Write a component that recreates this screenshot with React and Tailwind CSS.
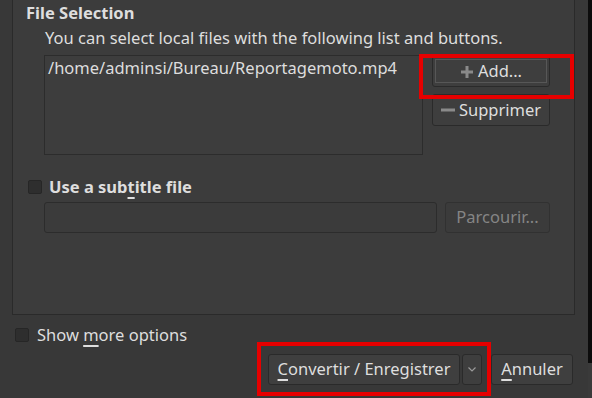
import React from "react";

function Checkbox() {
  return <div className="w-[14px] h-[14px] rounded-[2px] bg-[#2e2e2e] border border-[#262626] shrink-0" />;
}

function Btn({ className = "", children }) {
  return (
    <div className={"flex items-center justify-center rounded-[3px] border border-[#2a2a2a] bg-[#3e3e3e] " + className}>
      {children}
    </div>
  );
}

export default function App() {
  return (
    <div className="w-[592px] h-[398px] bg-[#383838] flex overflow-hidden relative text-[#dedede] font-['Noto_Sans',sans-serif] text-[16.5px]">
      <div className="w-[588px] flex flex-col">
        {/* group */}
        <div className="ml-[12px] w-[563px] h-[315px] border-x border-b border-[#2a2a2a] bg-[#3c3c3c] flex flex-col">
          <div className="pl-[13px] h-[25px] leading-[25px] font-bold">File Selection</div>
          <div className="pl-[32px] h-[25px] leading-[25px]">You can select local files with the following list and buttons.</div>
          <div className="flex mt-[5px] pl-[31px]">
            <div className="w-[379px] h-[100px] border border-[#2c2c2c] bg-[#3d3d3d] px-[3px] leading-[24px]">
              /home/adminsi/Bureau/Reportagemoto.mp4
            </div>
            <div className="ml-[9px] flex flex-col gap-[7px] pt-[1px]">
              <Btn className="w-[118px] h-[31px] relative">
                <div className="absolute left-[2px] top-[2px] right-[2px] bottom-[3px] border border-[#575757]" />
                <svg width="14" height="14" viewBox="0 0 14 14" className="mr-[4px]">
                  <rect x="5.5" y="1" width="3" height="12" fill="#8a8a8a" />
                  <rect x="1" y="5.5" width="12" height="3" fill="#8a8a8a" />
                </svg>
                <span>Add...</span>
              </Btn>
              <Btn className="w-[118px] h-[32px]">
                <svg width="14" height="14" viewBox="0 0 14 14" className="mr-[4px]">
                  <rect x="0" y="5.5" width="14" height="3" fill="#8a8a8a" />
                </svg>
                <span>Supprimer</span>
              </Btn>
            </div>
          </div>
          <div className="flex items-center mt-[25px] h-[14px] pl-[15px] gap-[7px]">
            <Checkbox />
            <span className="font-bold">
              Use a sub<span className="underline decoration-[1.5px] underline-offset-[4px]">t</span>itle file
            </span>
          </div>
          <div className="flex mt-[8px] pl-[31px] gap-[8px]">
            <div className="w-[393px] h-[31px] rounded-[3px] border border-[#2c2c2c] bg-[#3b3b3b]" />
            <div className="w-[105px] h-[31px] rounded-[3px] border border-[#313131] bg-[#3b3b3b] flex items-center justify-center text-[#858585]">
              Parcourir...
            </div>
          </div>
        </div>

        {/* show more options */}
        <div className="flex items-center mt-[13px] h-[14px] pl-[15px] gap-[8px]">
          <Checkbox />
          <span>
            Show <span className="underline decoration-[1.5px] underline-offset-[4px]">m</span>ore options
          </span>
        </div>

        {/* bottom buttons */}
        <div className="flex justify-end mt-[12px] pr-[15px]">
          <Btn className="w-[192px] h-[31px] bg-[#3f3f3f]">
            <span>
              <span className="underline decoration-[1.5px] underline-offset-[4px]">C</span>onvertir / Enregistrer
            </span>
          </Btn>
          <Btn className="ml-[2px] w-[20px] h-[31px] bg-[#3a3a3a] rounded-[2px]">
            <svg width="8" height="5" viewBox="0 0 8 5">
              <path d="M0.5 0.5 L4 4 L7.5 0.5" stroke="#9a9a9a" strokeWidth="1.2" fill="none" />
            </svg>
          </Btn>
          <Btn className="ml-[9px] w-[82px] h-[31px] bg-[#3f3f3f]">
            <span>
              <span className="underline decoration-[1.5px] underline-offset-[4px]">A</span>nnuler
            </span>
          </Btn>
        </div>
      </div>

      {/* right edge strip */}
      <div className="w-[4px] flex flex-col">
        <div className="h-[363px] bg-[#0c0c0c]" />
        <div className="flex-1 bg-[#3a3a3a]" />
      </div>

      {/* red annotation boxes */}
      <div className="absolute left-[419px] top-[54px] w-[155px] h-[45px] border-4 border-[#e60000]" />
      <div className="absolute left-[257px] top-[342px] w-[234px] h-[54px] border-4 border-[#e60000]" />
    </div>
  );
}
